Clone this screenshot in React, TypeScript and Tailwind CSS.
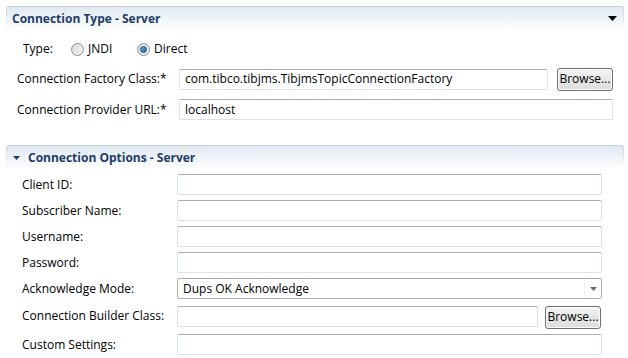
import React from "react";

const Input = ({ value, className }: { value?: string; className: string }) => (
  <div
    className={`flex h-[21px] items-center rounded-[2px] border border-[#dae2ea] border-t-[#abadb3] bg-white pl-[5px] text-[12px] text-black ${className}`}
  >
    {value}
  </div>
);

const Browse = ({ className }: { className: string }) => (
  <div
    className={`flex h-[23px] w-[56px] items-center justify-center rounded-[3px] border border-[#707070] bg-gradient-to-b from-[#f3f3f3] to-[#dcdcdc] text-[12px] text-black shadow-[inset_0_0_0_1px_#fcfcfc] ${className}`}
  >
    Browse...
  </div>
);

const Radio = ({ checked }: { checked?: boolean }) => (
  <div className="flex h-[13px] w-[13px] items-center justify-center rounded-full border border-[#8e8f8f] bg-gradient-to-br from-[#d8d8d8] to-[#f6f6f6]">
    {checked && (
      <div className="h-[7px] w-[7px] rounded-full border border-[#1c4f7c] bg-gradient-to-br from-[#6bb6e8] to-[#1d62a5]" />
    )}
  </div>
);

const SectionHeader = ({ title, expandedLeft }: { title: string; expandedLeft?: boolean }) => (
  <div className="ml-[6px] mr-[4px] h-[24px] rounded-t-[3px] bg-gradient-to-b from-[#c3d1e0] to-white px-px pt-px">
    <div className="flex h-full items-center rounded-t-[2px] bg-gradient-to-b from-[#e0e8f1] to-white">
      {expandedLeft && (
        <svg width="7" height="4" viewBox="0 0 7 4" className="ml-[6px] mr-[8px]">
          <path d="M0 0H7L3.5 4Z" fill="#1f3f6b" />
        </svg>
      )}
      <span className={`text-[12px] font-bold text-[#1d3d68] ${expandedLeft ? "" : "ml-[5px]"}`}>{title}</span>
      {!expandedLeft && (
        <svg width="9" height="5" viewBox="0 0 9 5" className="ml-auto mr-[6px]">
          <path d="M0 0H9L4.5 5Z" fill="#000" />
        </svg>
      )}
    </div>
  </div>
);

const Row = ({ label, children, className = "" }: { label: string; children: React.ReactNode; className?: string }) => (
  <div className={`flex items-center ${className}`}>
    <span className="w-[177px] shrink-0 whitespace-nowrap pl-[22px] text-[12px] text-black">{label}</span>
    {children}
  </div>
);

export default function App() {
  return (
    <div
      className="h-[358px] w-[628px] overflow-hidden bg-white pt-[6px]"
      style={{ fontFamily: '"Open Sans", "Noto Sans", sans-serif' }}
    >
      <SectionHeader title="Connection Type - Server" />

      <div className="mt-[9px] flex h-[20px] items-center text-[12px] text-black">
        <span className="ml-[23px] w-[48px]">Type:</span>
        <Radio />
        <span className="ml-[4px] w-[49px]">JNDI</span>
        <Radio checked />
        <span className="ml-[4px]">Direct</span>
      </div>

      <div className="mt-[9px] flex h-[22px] items-center">
        <span className="w-[179px] shrink-0 whitespace-nowrap pl-[17px] text-[12px] text-black">Connection Factory Class:*</span>
        <Input value="com.tibco.tibjms.TibjmsTopicConnectionFactory" className="w-[369px]" />
        <Browse className="ml-[9px] w-[55px]" />
      </div>

      <div className="mt-[9px] flex h-[21px] items-center">
        <span className="w-[179px] shrink-0 whitespace-nowrap pl-[17px] text-[12px] text-black">Connection Provider URL:*</span>
        <Input value="localhost" className="w-[434px]" />
      </div>

      <div className="mt-[25px]">
        <SectionHeader title="Connection Options - Server" expandedLeft />
      </div>

      <div className="mt-[5px] flex flex-col gap-[5px]">
        <Row label="Client ID:">
          <Input className="w-[425px]" />
        </Row>
        <Row label="Subscriber Name:">
          <Input className="w-[425px]" />
        </Row>
        <Row label="Username:">
          <Input className="w-[425px]" />
        </Row>
        <Row label="Password:">
          <Input className="w-[425px]" />
        </Row>
        <Row label="Acknowledge Mode:">
          <div className="flex h-[21px] w-[425px] items-center rounded-[2px] border border-[#abadb3] bg-white pl-[5px] text-[12px] text-black">
            <span className="flex-1">Dups OK Acknowledge</span>
            <div className="flex h-full w-[17px] items-center justify-center border-l border-[#f0f0f0]">
              <svg width="7" height="4" viewBox="0 0 7 4">
                <path d="M0 0H7L3.5 4Z" fill="#6d6d6d" />
              </svg>
            </div>
          </div>
        </Row>
        <Row label="Connection Builder Class:" className="h-[24px]">
          <Input className="w-[361px]" />
          <Browse className="ml-[7px] mt-[2px]" />
        </Row>
        <Row label="Custom Settings:" className="mt-px">
          <Input className="w-[425px]" />
        </Row>
      </div>
    </div>
  );
}
